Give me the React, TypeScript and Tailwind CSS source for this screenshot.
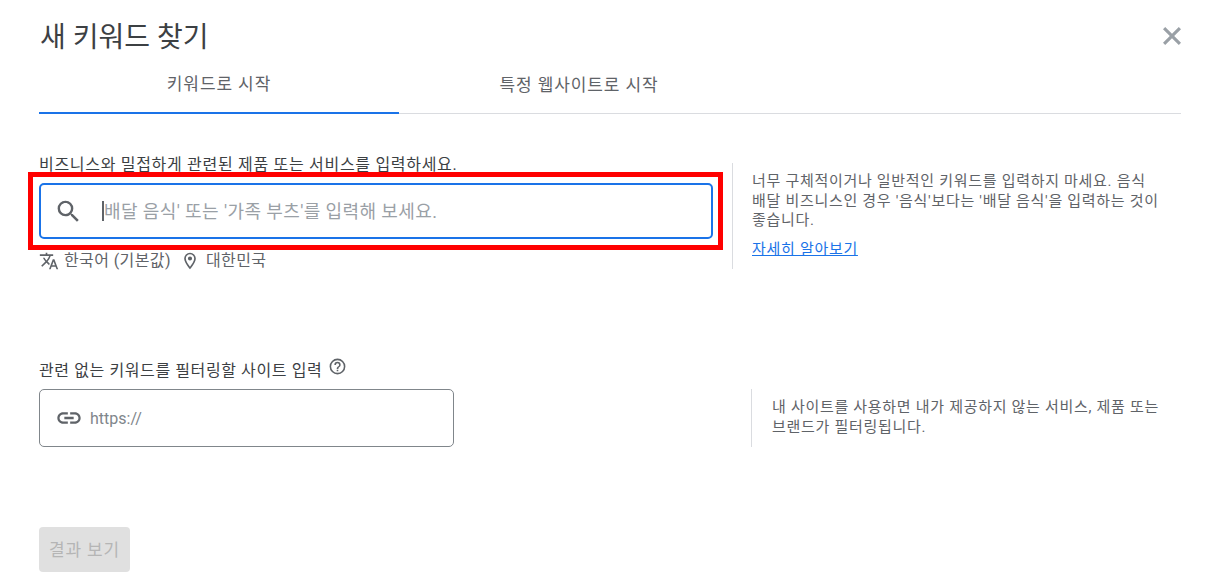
const font = "font-['Roboto','Noto_Sans_CJK_KR',sans-serif]";

export default function App() {
  return (
    <div className={`${font} relative w-[1213px] h-[582px] overflow-hidden bg-white text-[#202124]`}>
      <div className="flex items-center justify-between h-[72px] pl-[40px] pr-[29px]">
        <h1 className="pt-[4px] text-[28px] font-normal text-[#3c4043]">새 키워드 찾기</h1>
        <svg className="-mt-[1px]" width="24" height="24" viewBox="0 0 24 24" fill="#9aa0a6">
          <path d="M21 5.2 18.8 3 12 9.8 5.2 3 3 5.2 9.8 12 3 18.8 5.2 21 12 14.2 18.8 21 21 18.8 14.2 12z" />
        </svg>
      </div>

      <div className="flex ml-[39px] w-[1142px] h-[42px] border-b border-[#dadce0]">
        <div className="w-[360px] h-[42px] border-b-2 border-[#1a73e8] flex items-center justify-center text-[17px] tracking-[0.9px] text-[#5f6368] pb-[14px]">
          키워드로 시작
        </div>
        <div className="w-[360px] flex items-center justify-center text-[17px] tracking-[0.9px] text-[#5f6368] pb-[14px]">
          특정 웹사이트로 시작
        </div>
      </div>

      <div className="flex mt-[41px] ml-[39px]">
        <div className="w-[674px]">
          <div className="text-[16px] tracking-[0.7px] leading-[20px] h-[20px] text-[#3c4043]">비즈니스와 밀접하게 관련된 제품 또는 서비스를 입력하세요.</div>
          <div className="mt-[8px] h-[56px] border-2 border-[#1a73e8] rounded-[5px] flex items-center pl-[13px]">
            <svg width="29" height="29" viewBox="0 0 24 24" fill="#5f6368">
              <path d="M15.5 14h-.79l-.28-.27A6.47 6.47 0 0 0 16 9.5 6.5 6.5 0 1 0 9.5 16c1.61 0 3.09-.59 4.23-1.57l.27.28v.79l5 4.99L20.49 19zm-6 0C7.01 14 5 11.99 5 9.5S7.01 5 9.5 5 14 7.01 14 9.5 11.99 14 9.5 14z" />
            </svg>
            <span className="ml-[19px] w-[2px] h-[20px] bg-[#5f6368]" />
            <span className="text-[18px] tracking-[0.4px] text-[#9aa0a6]">배달 음식' 또는 '가족 부츠'를 입력해 보세요.</span>
          </div>
          <div className="flex items-center mt-[10px] h-[24px] text-[16px] tracking-[0.4px] text-[#5f6368]">
            <svg width="20" height="20" viewBox="0 0 24 24" fill="#5f6368">
              <path d="m12.87 15.07-2.54-2.51.03-.03A17.5 17.5 0 0 0 14.07 6H17V4h-7V2H8v2H1v2h11.17A15.7 15.7 0 0 1 9 11.35 15.7 15.7 0 0 1 6.69 8h-2c.73 1.63 1.73 3.17 2.98 4.56l-5.09 5.02L4 19l5-5 3.11 3.11zM18.5 10h-2L12 22h2l1.12-3h4.75L21 22h2zm-2.62 7 1.62-4.33L19.12 17z" />
            </svg>
            <span className="ml-[5px]">한국어 (기본값)</span>
            <svg className="ml-[9px]" width="20" height="20" viewBox="0 0 24 24" fill="#5f6368">
              <path d="M12 2a7 7 0 0 0-7 7c0 5.25 7 13 7 13s7-7.75 7-13a7 7 0 0 0-7-7m0 17c-2.2-2.9-5-7.2-5-10a5 5 0 0 1 10 0c0 2.8-2.8 7.1-5 10m0-12.5a2.5 2.5 0 1 0 0 5 2.5 2.5 0 0 0 0-5" />
            </svg>
            <span className="ml-[6px]">대한민국</span>
          </div>
        </div>
        <div className="ml-[19px] mt-[8px] h-[106px] whitespace-nowrap border-l border-[#dadce0] pl-[19px] pt-[9px] text-[15px] tracking-[0.7px] leading-[19.5px] text-[#5f6368]">
          <p>너무 구체적이거나 일반적인 키워드를 입력하지 마세요. 음식<br />배달 비즈니스인 경우 '음식'보다는 '배달 음식'을 입력하는 것이<br />좋습니다.</p>
          <a className="block mt-[9px] text-[#1a73e8] underline">자세히 알아보기</a>
        </div>
      </div>

      <div className="mt-[86px] ml-[39px] flex">
        <div className="w-[415px]">
          <div className="flex items-start h-[30px] text-[16px] tracking-[0.6px] text-[#3c4043]">
            <span>관련 없는 키워드를 필터링할 사이트 입력</span>
            <svg className="ml-[6px] -mt-[2px]" width="19" height="19" viewBox="0 0 24 24" fill="#5f6368">
              <path d="M11 18h2v-2h-2zm1-16a10 10 0 1 0 0 20 10 10 0 0 0 0-20m0 18a8 8 0 1 1 0-16 8 8 0 0 1 0 16m0-14a4 4 0 0 0-4 4h2a2 2 0 1 1 4 0c0 2-3 1.75-3 5h2c0-2.25 3-2.5 3-5a4 4 0 0 0-4-4" />
            </svg>
          </div>
          <div className="h-[58px] border border-[#80868b] rounded-[5px] flex items-center pl-[15px]">
            <svg width="28" height="28" viewBox="0 0 24 24" fill="#5f6368">
              <path d="M3.9 12c0-1.71 1.39-3.1 3.1-3.1h4V7H7c-2.76 0-5 2.24-5 5s2.24 5 5 5h4v-1.9H7c-1.71 0-3.1-1.39-3.1-3.1zM8 13h8v-2H8v2zm9-6h-4v1.9h4c1.71 0 3.1 1.39 3.1 3.1s-1.39 3.1-3.1 3.1h-4V17h4c2.76 0 5-2.24 5-5s-2.24-5-5-5z" />
            </svg>
            <span className="ml-[7px] pt-[2px] text-[16px] text-[#80868b]">https://</span>
          </div>
        </div>
        <div className="ml-[297px] mt-[30px] h-[58px] whitespace-nowrap border-l border-[#dadce0] pl-[20px] pt-[9px] text-[15px] tracking-[0.7px] leading-[19.5px] text-[#5f6368]">
          내 사이트를 사용하면 내가 제공하지 않는 서비스, 제품 또는<br />브랜드가 필터링됩니다.
        </div>
      </div>

      <button className="mt-[80px] ml-[39px] w-[91px] h-[45px] pt-[2px] rounded-[4px] bg-[#e0e0e0] text-[17px] tracking-[0.85px] text-[#b5b5b5]">결과 보기</button>

      <div className="absolute left-[28px] top-[172px] w-[695px] h-[78px] border-[5px] border-[#ff0000]" />
    </div>
  );
}
